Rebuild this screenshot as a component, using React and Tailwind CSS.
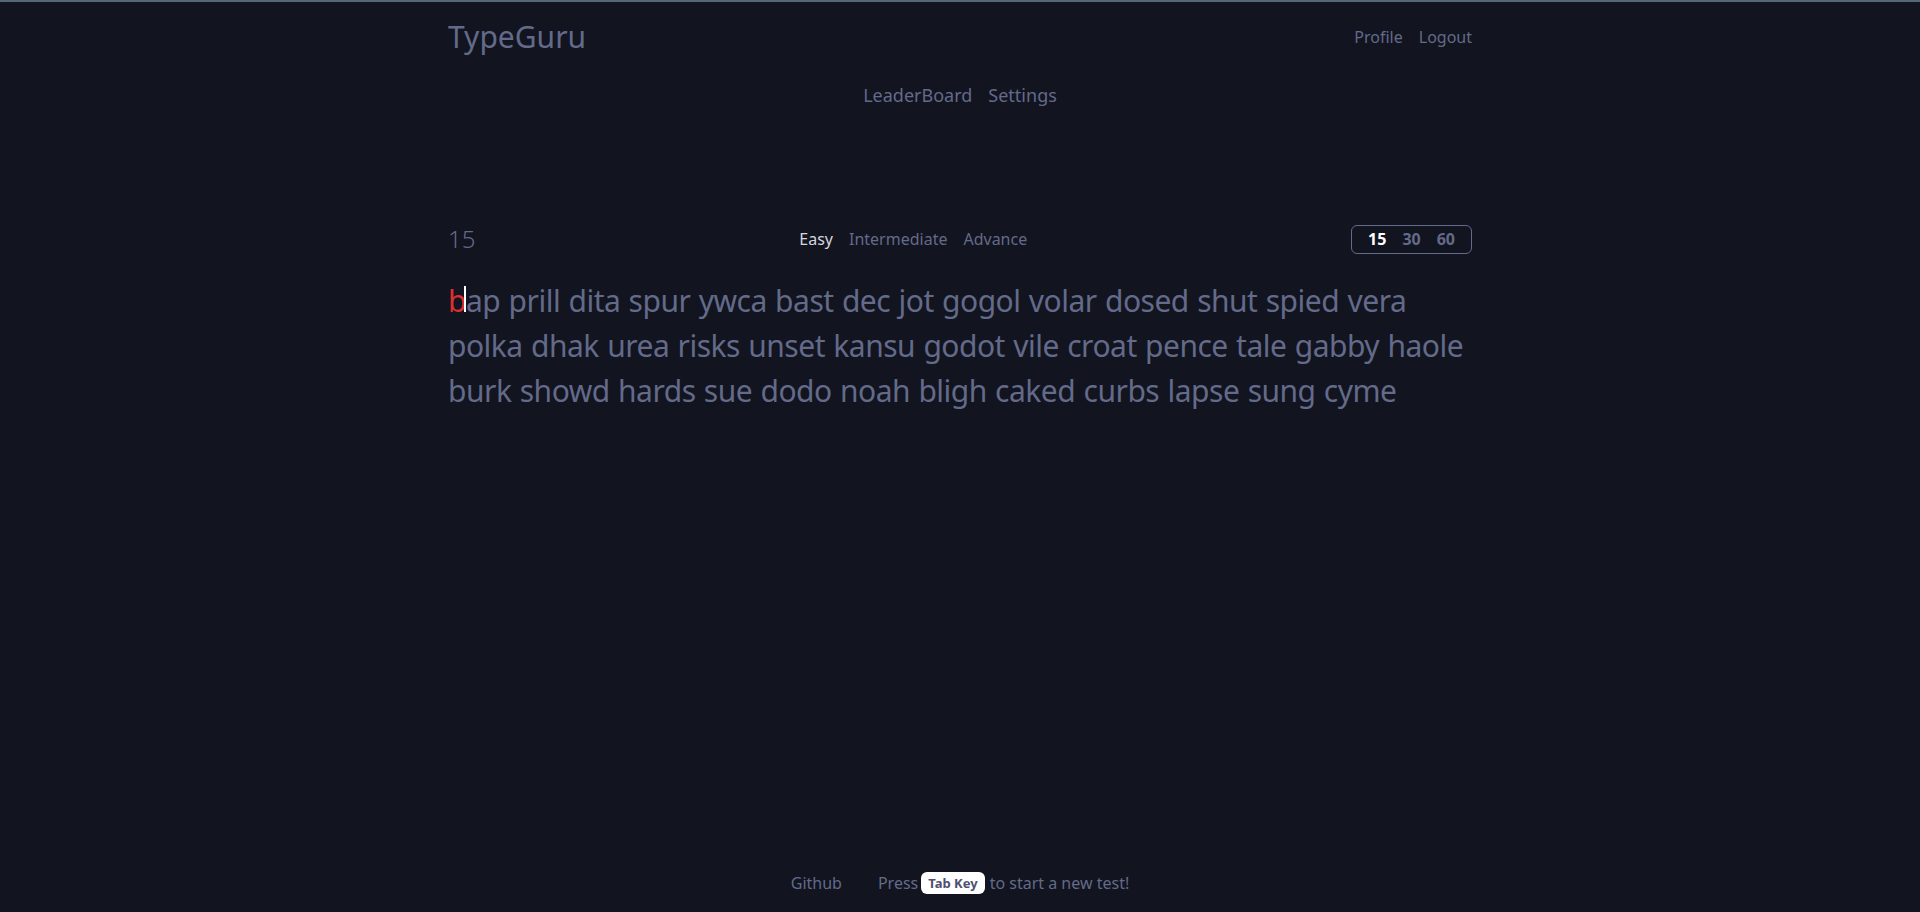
import { useState } from "react";

const WORDS =
  "bap prill dita spur ywca bast dec jot gogol volar dosed shut spied vera polka dhak urea risks unset kansu godot vile croat pence tale gabby haole burk showd hards sue dodo noah bligh caked curbs lapse sung cyme".split(
    " "
  );

export default function App() {
  const [time, setTime] = useState(15);
  const [mode, setMode] = useState("Easy");

  return (
    <div
      className="min-h-screen flex flex-col bg-[#12141f] border-t-2 border-[#56677a] text-[#636a8a]"
      style={{ fontFamily: '"Noto Sans", "Open Sans", sans-serif' }}
    >
      <div className="w-full max-w-5xl mx-auto flex-1 flex flex-col">
        {/* Header */}
        <div className="pt-[17px] flex items-center justify-between">
          <div className="text-3xl leading-9">TypeGuru</div>
          <div className="flex items-center gap-4 text-base">
            <a href="#">Profile</a>
            <a href="#">Logout</a>
          </div>
        </div>

        {/* Nav */}
        <div className="mt-[26px] flex justify-center gap-4 text-lg leading-7">
          <a href="#">LeaderBoard</a>
          <a href="#">Settings</a>
        </div>

        {/* Options row */}
        <div className="mt-[114px] flex items-center justify-between">
          <div className="text-2xl leading-8 font-light">{time}</div>
          <div className="flex items-center gap-4 text-base">
            {["Easy", "Intermediate", "Advance"].map((m) => (
              <button
                key={m}
                onClick={() => setMode(m)}
                className={mode === m ? "text-[#d4d7df]" : "text-[#636a8a]"}
              >
                {m}
              </button>
            ))}
          </div>
          <div className="h-[29px] flex items-center gap-4 px-4 border border-[#636a8a] rounded-md text-base font-bold">
            {[15, 30, 60].map((t) => (
              <button
                key={t}
                onClick={() => setTime(t)}
                className={time === t ? "text-white" : "text-[#636a8a]"}
              >
                {t}
              </button>
            ))}
          </div>
        </div>

        {/* Words */}
        <div className="mt-[23px] text-[30px] leading-[45px] tracking-[-0.5px] [word-spacing:1px]">
          {WORDS.map((w, i) => (
            <span key={i}>
              {i === 0 ? (
                <>
                  <span className="text-[#dc2f2f]">b</span>
                  <span className="relative">
                    <span className="absolute left-[-2px] top-[6px] w-[2px] h-[26px] bg-white" />
                    a
                  </span>
                  p
                </>
              ) : (
                w
              )}{" "}
            </span>
          ))}
        </div>
      </div>

      {/* Footer */}
      <div className="pb-[17px] flex items-center justify-center gap-9 text-base leading-6">
        <a href="#">Github</a>
        <div className="flex items-center">
          <span>Press</span>
          <span className="ml-[3px] mr-[5px] h-[22px] flex items-center px-[7px] rounded-md bg-white text-[#4b5170] text-[13px] font-bold">
            Tab Key
          </span>
          <span>to start a new test!</span>
        </div>
      </div>
    </div>
  );
}
